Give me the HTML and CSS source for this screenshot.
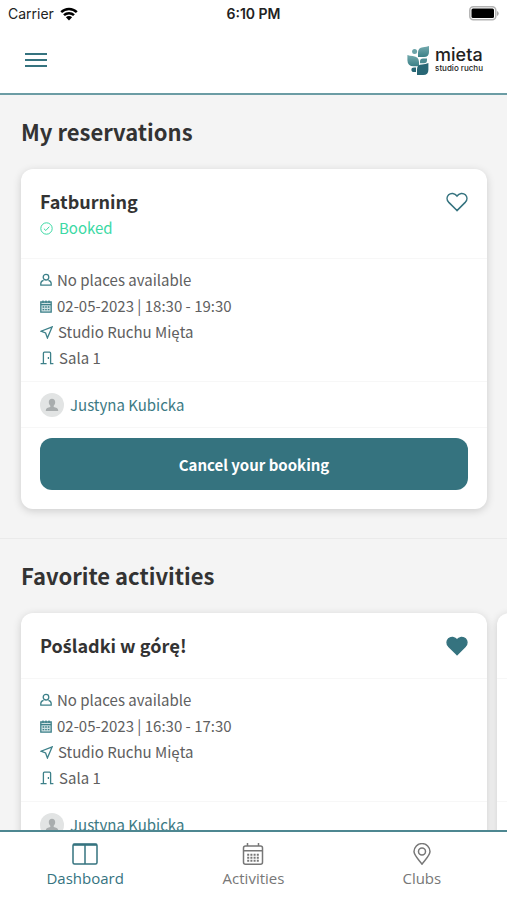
FILE: index.html
```html
<!DOCTYPE html>
<html lang="en">
<head>
<meta charset="utf-8">
<meta name="viewport" content="width=device-width, initial-scale=1">
<title>Dashboard</title>
<link rel="stylesheet" href="styles.css">
</head>
<body>
<svg class="sprite" aria-hidden="true">
  <symbol id="person" viewBox="0 0 12 14"><circle cx="6" cy="4.200" r="2.800"/><path d="M3.600 7.400C1.800 7.800.8 9 .8 10.600v1.600h10.400v-1.600c0-1.600-1-2.800-2.800-3.200"/></symbol>
  <symbol id="calendar" viewBox="0 0 12 13"><path fill="#cfe0e2" d="M.8 2h10.400v10.200H.8z"/><path d="M3 .4V3M6 .4V3M9 .4V3M.8 4.600h10.400"/><path d="M2.600 7h7M2.600 9.600h7" stroke-dasharray="1.600 1"/></symbol>
  <symbol id="arrow" viewBox="0 0 13 13"><path d="M12.200.8 1 5.200 5.600 7 7.400 12z"/></symbol>
  <symbol id="door" viewBox="0 0 14 14"><path d="M.6 12.600h2.800V2.200Q3.400 1.200 4.400 1.200h5.200q1 0 1 1v10.400h2.800M3.400 12.600h3.200M8.400 6v2"/></symbol>
  <symbol id="heart" viewBox="0 0 24 21"><path d="M12 19.800 2.800 10.600C.6 8.200.7 4.800 2.900 2.600 5.300.4 9.500.6 12 4 14.500.6 18.700.4 21.100 2.600c2.200 2.200 2.300 5.600.1 8z"/></symbol>
  <symbol id="avatar" viewBox="0 0 24 24"><circle cx="12" cy="12" r="12" fill="#e2e4e4"/><path fill="#a9adae" d="M12 5.800c2 0 3.200 1.400 3.200 3.300 0 1.600-.7 2.900-1.500 3.600v1.200c2.300.6 4.500 1.200 4.500 3.500v.6H5.800v-.6c0-2.300 2.200-2.900 4.500-3.500v-1.200c-.8-.7-1.500-2-1.500-3.600 0-1.900 1.200-3.300 3.200-3.300z"/></symbol>
</svg>

<div class="app">
  <div class="status">
    <span class="carrier">Carrier
      <svg width="18" height="14" viewBox="0 0 18 14" aria-hidden="true"><path d="M1.200 5.200a11.200 11.200 0 0 1 15.600 0M4 8.200a7.200 7.200 0 0 1 10 0" fill="none" stroke="#000" stroke-width="2.500"/><path d="M9 13.400 5.900 10.200a4.400 4.400 0 0 1 6.200 0z"/></svg>
    </span>
    <span class="time">6:10 PM</span>
    <svg class="battery" width="30" height="15" viewBox="0 0 30 15" aria-hidden="true"><rect x=".8" y=".8" width="26" height="13" rx="3.500" fill="#fff" stroke="#b3b3b3" stroke-width="1.500"/><rect x="2.500" y="2.500" width="22.500" height="9.600" rx="1.500"/><path d="M28 5v5q1.700-.8 1.700-2.500T28 5z" fill="#aaa"/></svg>
  </div>

  <header class="header">
    <button class="menu" type="button" aria-label="Menu"><svg width="22" height="16" viewBox="0 0 22 16"><path d="M0 2h22M0 8h22M0 14h22" stroke="#35737f" stroke-width="2"/></svg></button>
    <a class="brand" href="#">
      <svg width="23" height="31" viewBox="0 0 23 31" aria-hidden="true">
        <defs><linearGradient id="leaf" x2="0" y2="1"><stop offset="0" stop-color="#74aaae"/><stop offset="1" stop-color="#3b8087"/></linearGradient></defs>
        <path fill="url(#leaf)" d="M22 1v6q0 5-5 5h-6V7.500Q11 2.800 16 2.200 19.500 2 22 1z"/>
        <circle cx="7.600" cy="6.400" r="2.500" fill="#6ba3a8"/>
        <path fill="url(#leaf)" d="M.4 10q2.500.9 5.400.9 6.200.7 6.200 6v4.300H6.600Q.6 21.200.4 15.200z"/>
        <path fill="#4c8b92" d="M13 18.200v-1.600q0-3 3-3h4v1.600q0 3-3 3z"/>
        <path fill="#286775" d="M10 30v-5.800q0-4.800 5-4.800 3.500 0 6.400-1.400v6.800q0 5.200-5.200 5.200z"/>
        <path fill="#286775" d="M9 22.400V27H7q-2.600 0-2.600-2.300T7 22.400z"/>
      </svg>
      <span class="wordmark"><span class="name">mieta</span><span class="sub">studio ruchu</span></span>
    </a>
  </header>

  <main class="content">
    <section class="section">
      <h1 class="heading">My reservations</h1>
      <article class="card">
        <div class="top">
          <div>
            <h2 class="title">Fatburning</h2>
            <p class="booked"><svg width="13" height="13" viewBox="0 0 13 13" aria-hidden="true"><circle cx="6.500" cy="6.500" r="5.700"/><path d="m3.900 6.700 1.900 1.800 3.500-3.800"/></svg>Booked</p>
          </div>
          <button class="fav" type="button" aria-label="Add to favorites"><svg width="22" height="20"><use href="#heart"/></svg></button>
        </div>
        <ul class="details">
          <li><svg width="12" height="14"><use href="#person"/></svg>No places available</li>
          <li><svg width="12" height="13"><use href="#calendar"/></svg>02-05-2023 | 18:30 - 19:30</li>
          <li><svg width="13" height="13"><use href="#arrow"/></svg>Studio Ruchu Mięta</li>
          <li><svg width="14" height="14"><use href="#door"/></svg>Sala 1</li>
        </ul>
        <div class="coach"><svg width="24" height="24"><use href="#avatar"/></svg><a href="#">Justyna Kubicka</a></div>
        <div class="action"><button class="cancel" type="button">Cancel your booking</button></div>
      </article>
    </section>

    <section class="section">
      <h1 class="heading">Favorite activities</h1>
      <div class="slides">
        <article class="card">
          <div class="top">
            <h2 class="title">Po<span class="accent">ś</span>ladki w górę!</h2>
            <button class="fav on" type="button" aria-label="Remove from favorites"><svg width="22" height="20"><use href="#heart"/></svg></button>
          </div>
          <ul class="details">
            <li><svg width="12" height="14"><use href="#person"/></svg>No places available</li>
            <li><svg width="12" height="13"><use href="#calendar"/></svg>02-05-2023 | 16:30 - 17:30</li>
            <li><svg width="13" height="13"><use href="#arrow"/></svg>Studio Ruchu Mięta</li>
            <li><svg width="14" height="14"><use href="#door"/></svg>Sala 1</li>
          </ul>
          <div class="coach"><svg width="24" height="24"><use href="#avatar"/></svg><a href="#">Justyna Kubicka</a></div>
        </article>
        <article class="card">
          <div class="top"></div>
          <ul class="details"><li></li><li></li><li></li><li></li></ul>
          <div class="coach"></div>
        </article>
      </div>
    </section>
  </main>

  <nav class="tabs">
    <a class="tab active" href="#"><svg width="26" height="22" viewBox="0 0 26 22" aria-hidden="true"><rect x="1" y="1" width="24" height="20" rx="1.500"/><path d="M13 1v20"/><path d="M1 1.800h24" stroke-width="2"/></svg>Dashboard</a>
    <a class="tab" href="#"><svg width="22" height="22" viewBox="0 0 22 22" aria-hidden="true"><rect x="1.500" y="3" width="19" height="18.200" rx="2"/><path d="M1.500 7.800h19M5.500 0v3M16.500 0v3"/><path d="M5.200 11.800h12M5.200 14.800h12M5.200 17.800h12" stroke-width="2" stroke-dasharray="2 1.200"/></svg>Activities</a>
    <a class="tab" href="#"><svg width="18" height="22" viewBox="0 0 18 22" aria-hidden="true"><path d="M9 21.200C7 18 1 12.800 1 8.600a8 8 0 0 1 16 0c0 4.200-6 9.400-8 12.600z"/><circle cx="9" cy="8.400" r="3.500"/></svg>Clubs</a>
  </nav>
</div>
</body>
</html>
```
FILE: styles.css
```css
* { box-sizing: border-box; }

body, h1, h2, p, ul { margin: 0; padding: 0; }

body {
  font-family: "Noto Sans CJK JP", "Noto Sans", sans-serif;
  font-size: 15px;
  color: #606060;
  background: #f4f4f4;
}

button { border: 0; padding: 0; background: none; font: inherit; cursor: pointer; }
a { color: inherit; text-decoration: none; }
svg { display: block; flex: none; }
.sprite { position: absolute; width: 0; height: 0; }

.app { display: flex; flex-direction: column; height: 100vh; }

.status {
  display: grid;
  grid-template-columns: 1fr auto 1fr;
  align-items: center;
  height: 27px;
  padding: 0 8px;
  background: #fff;
  color: #222;
  font: 14px/27px Inter, sans-serif;
}
.carrier { display: flex; align-items: center; gap: 6px; }
.time { font-weight: 600; }
.battery { justify-self: end; }

.header {
  display: flex;
  flex: none;
  align-items: center;
  justify-content: space-between;
  height: 68px;
  padding: 0 24px 0 25px;
  background: #fff;
  border-bottom: 2px solid #6b9ca4;
}
.brand { display: flex; align-items: center; gap: 5px; color: #222; }
.wordmark { display: flex; flex-direction: column; font-family: Inter, sans-serif; }
.name { font-size: 18px; line-height: 16px; font-weight: 500; }
.sub { font-size: 8px; line-height: 10px; font-weight: 500; }

.content { flex: 1; min-height: 0; overflow: hidden auto; scrollbar-width: none; }

.section { padding: 19px 20px 29px 21px; }
.section + .section { border-top: 1px solid #eaeaea; }

.heading { margin-bottom: 21px; font-size: 22px; line-height: 34px; font-weight: 700; color: #333; }

.card {
  background: #fff;
  border-radius: 12px;
  box-shadow: 0 2px 8px rgba(0, 0, 0, .16);
}

.slides { display: flex; gap: 10px; }
.slides .card { flex: 0 0 100%; }

.top {
  display: flex;
  align-items: flex-start;
  justify-content: space-between;
  min-height: 65px;
  padding: 19px 19px 16px;
}
.title { font-size: 18px; line-height: 26px; font-weight: 700; color: #333; }
.accent { font-family: "Open Sans", sans-serif; line-height: 1; }
.booked { display: flex; align-items: center; gap: 6px; line-height: 28px; color: #3bd9a4; }
.booked svg, .fav svg, .details svg, .tab svg { fill: none; stroke: currentColor; }

.fav { padding: 4px 0; color: #35737f; }
.fav svg { stroke-width: 1.700; }
.fav.on svg { fill: currentColor; }

.details { padding: 8px 19px 10px; list-style: none; border-top: 1px solid #f7f7f7; }
.details li { display: flex; align-items: center; gap: 5px; min-height: 26px; line-height: 26px; }
.details svg { color: #3d8089; stroke-width: 1.300; }

.coach {
  display: flex;
  align-items: center;
  gap: 6px;
  min-height: 46px;
  padding: 0 19px;
  border-top: 1px solid #f7f7f7;
  color: #3c7a84;
}

.action { padding: 10px 19px 19px; border-top: 1px solid #f7f7f7; }
.cancel {
  display: block;
  width: 100%;
  height: 52px;
  border-radius: 12px;
  background: #35737f;
  color: #fff;
  font-weight: 700;
}

.tabs {
  display: grid;
  grid-template-columns: repeat(3, 1fr);
  flex: none;
  height: 70px;
  padding: 0 1px;
  background: #fff;
  border-top: 2px solid #4d8791;
}
.tab {
  display: flex;
  flex-direction: column;
  align-items: center;
  gap: 1px;
  padding-top: 11px;
  font: 15px/24px "Open Sans", sans-serif;
  color: #777;
}
.tab.active { color: #35737f; }
.tab svg { stroke-width: 1.500; }
```
